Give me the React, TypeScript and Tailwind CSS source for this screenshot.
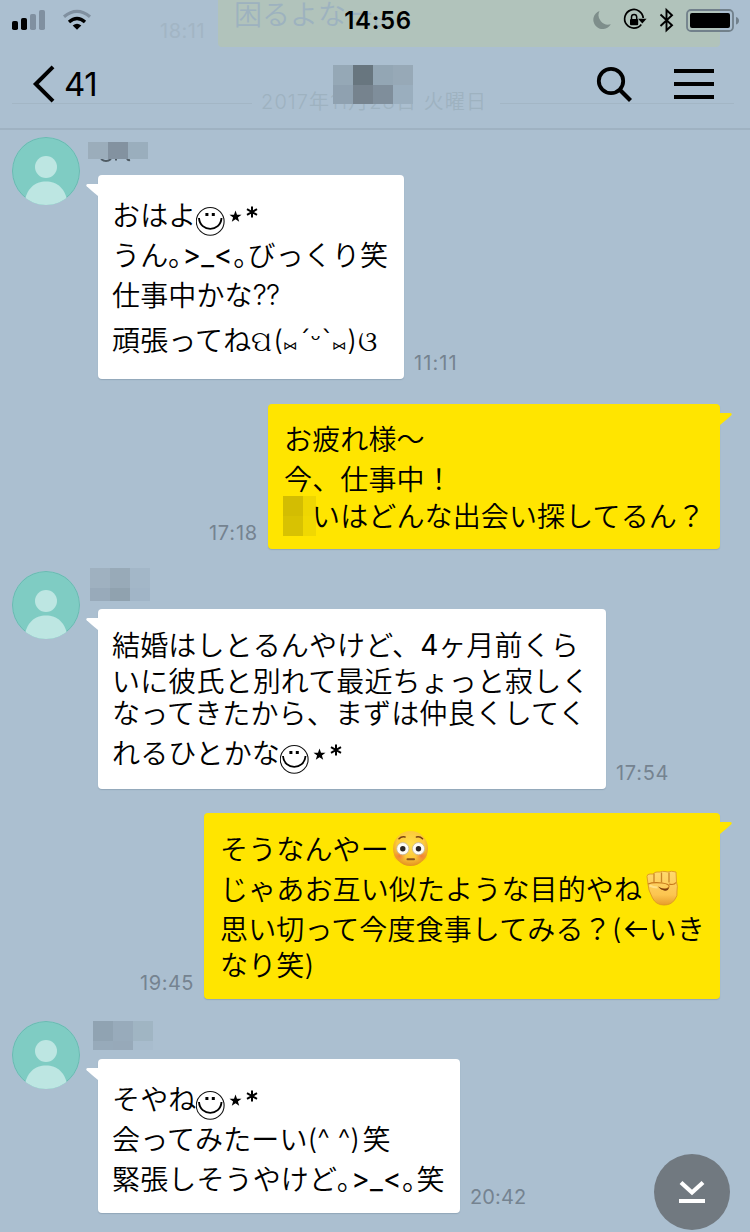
import type { ReactNode } from "react";

const CJK = "font-['Noto_Sans_CJK_JP',sans-serif] font-[350]";
const UI = "font-['Inter','Noto_Sans_CJK_JP',sans-serif]";

function Seg({ w, cls = "", children }: { w: string; cls?: string; children?: ReactNode }) {
  return <span className={`flex shrink-0 items-center whitespace-pre ${w} ${cls}`}>{children}</span>;
}

function Line({ h, children }: { h: string; children: ReactNode }) {
  return <div className={`flex items-center whitespace-pre text-[28px] ${h}`}>{children}</div>;
}

function Jp({ children }: { children: ReactNode }) {
  return <span className={`-mt-[3px] block shrink-0 leading-[28px] tracking-[0.14px] ${CJK}`}>{children}</span>;
}

function Smiley() {
  return (
    <svg className="mt-[11px] shrink-0" width="65" height="30" viewBox="0 0 65 30" fill="none">
      <circle cx="14.2" cy="15.4" r="13.9" stroke="#111" strokeWidth="1.1" />
      <path d="M3 12C4 26.5 24.500 26.500 25.500 12" stroke="#000" strokeWidth="1.9" />
      <path d="M9.400 8.500h3M15.800 8.500h3" stroke="#000" strokeWidth="3" />
      <path d="m39.500 4.500 1.500 4.200 4.500.1-3.600 2.700 1.300 4.300-3.700-2.600-3.700 2.600 1.300-4.300-3.600-2.700 4.500-.1z" fill="#000" />
      <path d="M56 .5v11M51 3.200l10 5.700M61 3.200l-10 5.700" stroke="#000" strokeWidth="2" />
    </svg>
  );
}

function Kao() {
  return <Seg w="w-[51px]" cls="font-['Inter',sans-serif] text-[28px] font-normal tracking-[0.2px] leading-[28px]">{">_<"}</Seg>;
}

function Flushed() {
  return (
    <svg className="ml-[3px] shrink-0" width="38" height="38" viewBox="0 0 38 38">
      <defs>
        <radialGradient id="face" cx=".5" cy=".38" r=".65">
          <stop offset="0" stopColor="#ffe04a" />
          <stop offset=".6" stopColor="#fdc93a" />
          <stop offset="1" stopColor="#e08a1c" />
        </radialGradient>
        <radialGradient id="cheek">
          <stop offset="0" stopColor="#f26a3c" stopOpacity=".8" />
          <stop offset="1" stopColor="#f28a3c" stopOpacity="0" />
        </radialGradient>
      </defs>
      <circle cx="18.500" cy="18.500" r="17.500" fill="url(#face)" />
      <ellipse cx="7.500" cy="26" rx="6.500" ry="5.500" fill="url(#cheek)" />
      <ellipse cx="29.500" cy="26" rx="6.500" ry="5.500" fill="url(#cheek)" />
      <circle cx="10.800" cy="18.700" r="6.100" fill="#fffdf5" stroke="#c4b59a" strokeWidth=".8" />
      <circle cx="26.500" cy="18.700" r="6.100" fill="#fffdf5" stroke="#c4b59a" strokeWidth=".8" />
      <circle cx="10.800" cy="18.700" r="2.700" fill="#2d2724" />
      <circle cx="26.500" cy="18.700" r="2.700" fill="#2d2724" />
      <path d="M7 8.700q2.500-2.500 6-1.700M30.500 8.700q-2.500-2.500-6-1.700" stroke="#7b4312" strokeWidth="1.600" fill="none" strokeLinecap="round" />
      <path d="M15.500 29.200h6.500" stroke="#84501c" strokeWidth="2" strokeLinecap="round" />
    </svg>
  );
}

function Fist() {
  return (
    <svg className="-mt-[3px] ml-[3px] shrink-0" width="36" height="38" viewBox="0 0 36 38">
      <defs>
        <linearGradient id="hand" x2="0" y2="1">
          <stop offset="0" stopColor="#ffda6e" />
          <stop offset=".7" stopColor="#fcc550" />
          <stop offset="1" stopColor="#e79d2c" />
        </linearGradient>
      </defs>
      <path
        d="M3 15 2 7.500Q2 5 5 5L8.500 5Q9 3 12 3L15 3Q17 2 20 2.500L23 3Q26 1.500 31 3L31.500 13Q33 17 32 22Q33 27 29.500 31Q26 36 19 36Q11 36 7.500 29L4 21Z"
        fill="url(#hand)"
        stroke="#dd9725"
        strokeWidth=".9"
      />
      <path d="M9 4.500v9M16.500 3.500v10M24 3.500v10" stroke="#c98528" strokeWidth="1.300" />
      <path d="M3 15q5-2 14-1 8 1 7 4-2 3-8 2M31 13.500q-2 3-7 1.500" stroke="#c87a1c" strokeWidth="1.200" fill="none" />
      <path d="M13 17.500q7 4 11 1-1 4-5 3-4-1-6-4z" fill="#7d3c0c" />
      <path d="M4.500 16.500q4 2 8 2" stroke="#ffe18a" strokeWidth="2" fill="none" />
    </svg>
  );
}

function Avatar() {
  return (
    <svg className="shrink-0" width="68" height="68" viewBox="0 0 68 68">
      <defs>
        <clipPath id="av">
          <circle cx="34" cy="34" r="34" />
        </clipPath>
      </defs>
      <g clipPath="url(#av)">
        <rect width="68" height="68" fill="#7fccc3" />
        <circle cx="34" cy="34" r="33.500" fill="none" stroke="#6cb8b2" />
        <circle cx="34" cy="30" r="11" fill="#bde6e2" />
        <path d="M12 68C14 51 23 44.500 34 44.500S54 51 56 68Z" fill="#bde6e2" />
        <path d="M12 66.500Q34 70 56 66.500V68H12z" fill="#a3cfc8" />
      </g>
    </svg>
  );
}

function TailLeft() {
  return (
    <svg className="absolute -left-[12px] top-[9px]" width="13" height="13" viewBox="0 0 13 13">
      <path d="M13 0H1.500Q-.5.500.7 2.300L6 7L12 12H13z" fill="#fff" />
    </svg>
  );
}

function TailRight() {
  return (
    <svg className="absolute -right-[12px] top-[9px]" width="13" height="13" viewBox="0 0 13 13">
      <path d="M0 0H11.500Q13.500.5 12.300 2.300L7 7L1 12H0z" fill="#ffe500" />
    </svg>
  );
}

function Time({ w, children }: { w: string; children: ReactNode }) {
  return (
    <span className={`mb-[6px] self-end whitespace-nowrap text-[20px] leading-[20px] text-[#758390] ${w} ${UI}`}>{children}</span>
  );
}

function Incoming({ name, size, time, timeW, children }: { name: ReactNode; size: string; time: string; timeW: string; children: ReactNode }) {
  return (
    <div className="flex pl-[12px]">
      <Avatar />
      <div className="flex flex-col pl-[8px]">
        <div className="h-[38px]">{name}</div>
        <div className="flex pl-[10px]">
          <div className={`relative rounded-[4px] bg-white pl-[14px] shadow-[0_1px_1px_rgba(70,95,115,0.25)] ${size}`}>
            <TailLeft />
            {children}
          </div>
          <div className="flex pl-[10px]">
            <Time w={timeW}>{time}</Time>
          </div>
        </div>
      </div>
    </div>
  );
}

function Outgoing({ size, time, timeW, children }: { size: string; time: string; timeW: string; children: ReactNode }) {
  return (
    <div className="flex justify-end pr-[30px]">
      <div className="flex pr-[10px]">
        <Time w={timeW}>{time}</Time>
      </div>
      <div className={`relative rounded-[4px] bg-[#ffe500] pl-[16px] shadow-[0_1px_1px_rgba(70,95,115,0.25)] ${size}`}>
        <TailRight />
        {children}
      </div>
    </div>
  );
}

function Mosaic({ cls, cells }: { cls: string; cells: string[] }) {
  return (
    <div className={`grid ${cls}`}>
      {cells.map((c, i) => (
        <div key={i} className={c} />
      ))}
    </div>
  );
}

function Header() {
  return (
    <header className="relative h-[130px] shrink-0 overflow-hidden border-b-2 border-[#9fb2c2] bg-[#abbfd0]">
      <div className={`absolute left-[160px] top-[21px] text-[20px] leading-[20px] tracking-[0.5px] text-[#a2b5c4] ${UI}`}>18:11</div>
      <div className="absolute left-[218px] top-0 h-[47px] w-[502px] rounded-b-[4px] bg-[#b1c3bb]">
        <div className={`pl-[16px] text-[28px] leading-[26px] text-[#9db2bf] ${CJK}`}>困るよなー。</div>
      </div>
      <div className="absolute left-[12px] top-[103px] h-px w-[240px] bg-[#a3b6c5]" />
      <div className="absolute left-[500px] top-[103px] h-px w-[234px] bg-[#a3b6c5]" />
      <div className="absolute left-[261px] top-[90px] whitespace-nowrap font-['Inter','Noto_Sans_CJK_JP',sans-serif] text-[20px] font-[350] leading-[24px] tracking-[1.1px] text-[#9eb2c0]">
        2017年11月28日 火曜日
      </div>

      <div className="relative flex h-[41px] items-start justify-between">
        <div className="flex w-[333px] pl-[12px] pt-[8px]">
          <svg width="84" height="24" viewBox="0 0 84 24">
            <rect x="0" y="13" width="6" height="9" rx="1.800" />
            <rect x="9" y="10" width="6" height="12" rx="1.800" />
            <rect x="18" y="6" width="6" height="16" rx="1.800" fill="#8090a0" />
            <rect x="27" y="2" width="6" height="20" rx="1.800" fill="#8090a0" />
            <path d="M52 8.700Q65 -1.800 78 8.700" fill="none" stroke="#8090a0" strokeWidth="3.200" />
            <path d="M57 14Q65 7 73 14" fill="none" stroke="#000" strokeWidth="3.400" />
            <path d="M60.700 17.500Q65 14 69.300 17.500L65 21.800z" />
          </svg>
        </div>
        <div className={`w-[84px] pl-[6px] pt-[7px] text-center text-[24px] font-semibold leading-[28px] tracking-[0.7px] ${UI}`}>14:56</div>
        <div className="flex w-[333px] justify-end pr-[11px] pt-[7px]">
          <svg width="148" height="28" viewBox="0 0 148 28" fill="none">
            <path d="M8.500 4A9.300 9.300 0 1 0 19.800 17.200A9.500 9.500 0 0 1 8.500 4z" fill="#7e8e8b" />
            <path d="M50.300 17.500A9.300 9.300 0 1 1 52.200 11" stroke="#000" strokeWidth="1.700" />
            <path d="M47 11.800h8.600L51.300 16.500z" fill="#000" />
            <rect x="39" y="12" width="8.200" height="6.200" rx="1" fill="#000" />
            <path d="M40.500 12.500V10a2.600 2.600 0 0 1 5.200 0v2.500" stroke="#000" strokeWidth="1.500" />
            <path d="M69.500 7.500 81 18.300 75.500 23.300V3L81 8.200 69.500 19" stroke="#000" strokeWidth="1.900" />
            <rect x="96" y="3" width="46" height="21" rx="4" stroke="#71808b" strokeWidth="1.800" />
            <rect x="99" y="6" width="40" height="15" rx="2" fill="#000" />
            <path d="M145 10q3 1 3 3.800t-3 3.800z" fill="#71808b" />
          </svg>
        </div>
      </div>

      <div className="relative flex h-[86px] items-start">
        <div className="flex w-[333px] pl-[32px] pt-[23px]">
          <svg width="24" height="40" viewBox="0 0 24 40" fill="none">
            <path d="M21 2.800 3.800 20 21 37.200" stroke="#000" strokeWidth="4" />
          </svg>
          <span className={`pl-[8px] pt-[2px] text-[33px] leading-[36px] tracking-[-0.5px] ${UI}`}>41</span>
        </div>
        <Mosaic
          cls="mt-[24px] w-[80px] grid-cols-4 grid-rows-[20px_19px]"
          cells={[
            "bg-[#95a8b6]", "bg-[#68767f]", "bg-[#93a6b4]", "bg-[#97a9b7]",
            "bg-[#8fa1b0]", "bg-[#76838e]", "bg-[#7f8e9b]", "bg-[#9aaebe]",
          ]}
        />
        <div className="flex flex-1 justify-end gap-[40px] pr-[36px] pt-[25px]">
          <svg width="38" height="38" viewBox="0 0 38 38" fill="none" stroke="#000">
            <circle cx="15" cy="15" r="12.200" strokeWidth="3.800" />
            <path d="M24 24 34.500 34.500" strokeWidth="4.200" />
          </svg>
          <div className="flex flex-col gap-[9px] pt-[3px]">
            <div className="h-[4px] w-[40px] bg-black" />
            <div className="h-[4px] w-[40px] bg-black" />
            <div className="h-[4px] w-[40px] bg-black" />
          </div>
        </div>
      </div>
    </header>
  );
}

export default function App() {
  return (
    <div className="relative flex h-[1232px] w-[750px] flex-col overflow-hidden bg-[#abbfd0] text-black">
      <Header />
      <main className="flex flex-col pt-[7px]">
        <Incoming
          size="h-[204px] w-[306px] pt-[20px]"
          time="11:11"
          timeW="tracking-[1.1px]"
          name={
            <div className="pt-[5px]">
              <Mosaic cls="w-[60px] grid-cols-3 grid-rows-[17px]" cells={["bg-[#9badbb]", "bg-[#8392a0]", "bg-[#9aaebd]"]} />
              <svg className="ml-[12px]" width="32" height="4" viewBox="0 0 32 4" fill="none">
                <path d="M1 0Q6 4 11 0M16 0v1.500M27 0q1 1.500 3 1" stroke="#4f5b64" strokeWidth="2" />
              </svg>
            </div>
          }
        >
          <Line h="h-[40px]"><Jp>おはよ</Jp><Smiley /></Line>
          <Line h="h-[40px]"><Jp>うん｡</Jp><Kao /><Jp>｡びっくり笑</Jp></Line>
          <Line h="h-[40px]"><Jp>仕事中かな</Jp><Seg w="w-[40px]" cls="font-['Inter',sans-serif] font-[350] leading-[28px] tracking-[-0.8px]">??</Seg></Line>
          <Line h="h-[50px]">
            <Jp>頑張ってね</Jp>
            <Seg w="w-[22px]" cls="leading-[28px]">ପ</Seg>
            <Seg w="w-[10px]" cls="font-['Inter',sans-serif] font-[350] leading-[28px]">(</Seg>
            <Seg w="w-[15px]" cls="pt-[8px] text-[24px] leading-[28px]">⑅</Seg>
            <Seg w="w-[34px]" cls="font-['DejaVu_Sans',sans-serif] text-[25px] leading-[28px]">´ᵕ`</Seg>
            <Seg w="w-[15px]" cls="pt-[8px] text-[24px] leading-[28px]">⑅</Seg>
            <Seg w="w-[11px]" cls="font-['Inter',sans-serif] font-[350] leading-[28px]">)</Seg>
            <Seg w="w-[22px]" cls="leading-[28px]">ଓ</Seg>
          </Line>
        </Incoming>

        <div className="h-[25px]" />
        <Outgoing size="h-[145px] w-[452px] pt-[15px]" time="17:18" timeW="tracking-[0.8px]">
          <Line h="h-[40px]"><Jp>お疲れ様〜</Jp></Line>
          <Line h="h-[40px]"><Jp>今、仕事中！</Jp></Line>
          <Line h="h-[34px]">
            <Mosaic
              cls="-ml-px mr-[-4px] w-[33px] shrink-0 grid-cols-[20px_13px] grid-rows-[20px_20px]"
              cells={["bg-[#d3bd02]", "bg-[#eed602]", "bg-[#d8c202]", "bg-[#f0d802]"]}
            />
            <Jp>いはどんな出会い探してるん？</Jp>
          </Line>
        </Outgoing>

        <div className="h-[22px]" />
        <Incoming
          size="h-[180px] w-[508px] pt-[18px]"
          time="17:54"
          timeW="tracking-[0.7px]"
          name={
            <Mosaic
              cls="-mt-[3px] ml-[2px] w-[60px] grid-cols-3 grid-rows-[20px_13px]"
              cells={["bg-[#9fb1c0]", "bg-[#98aab8]", "bg-[#a3b7c8]", "bg-[#98aaba]", "bg-[#90a2af]", "bg-[#a1b5c7]"]}
            />
          }
        >
          <Line h="h-[36px]"><Jp>結婚はしとるんやけど、</Jp><Seg w="w-[18px]" cls="font-['Inter',sans-serif] leading-[28px]">4</Seg><Jp>ヶ月前くら</Jp></Line>
          <Line h="h-[36px]"><Jp>いに彼氏と別れて最近ちょっと寂しく</Jp></Line>
          <Line h="h-[28px]"><Jp>なってきたから、まずは仲良くしてく</Jp></Line>
          <Line h="h-[52px]"><Jp>れるひとかな</Jp><Smiley /></Line>
        </Incoming>

        <div className="h-[24px]" />
        <Outgoing size="h-[186px] w-[516px] pt-[16px]" time="19:45" timeW="tracking-[0.5px]">
          <Line h="h-[40px]"><Jp>そうなんやー</Jp><Flushed /></Line>
          <Line h="h-[40px]"><Jp>じゃあお互い似たような目的やね</Jp><Fist /></Line>
          <Line h="h-[40px]">
            <Jp>思い切って今度食事してみる？</Jp>
            <Seg w="w-[11px]" cls="font-['Inter',sans-serif] font-[350] leading-[28px]">(</Seg>
            <svg className="mr-px shrink-0" width="25" height="20" viewBox="0 0 25 20" fill="none"><path d="M24 10H3M11 2.500 3.500 10l7.500 7.500" stroke="#000" strokeWidth="2.200" /></svg>
            <Jp>いき</Jp>
          </Line>
          <Line h="h-[32px]"><Jp>なり笑</Jp><Seg w="w-[10px]" cls="font-['Inter',sans-serif] font-[350] leading-[28px]">)</Seg></Line>
        </Outgoing>

        <div className="h-[22px]" />
        <Incoming
          size="h-[154px] w-[362px] pt-[20px]"
          time="20:42"
          timeW="tracking-[0.1px]"
          name={
            <Mosaic
              cls="ml-[5px] w-[60px] grid-cols-3 grid-rows-[20px_9px]"
              cells={["bg-[#90a3b2]", "bg-[#98abbb]", "bg-[#a0b5c3]", "bg-[#97aaba]", "bg-[#97a9b9]", "bg-[#a8bccd]"]}
            />
          }
        >
          <Line h="h-[40px]"><Jp>そやね</Jp><Smiley /></Line>
          <Line h="h-[40px]"><Jp>会ってみたーい</Jp><Seg w="w-[55px]" cls="font-['Inter',sans-serif] font-[350] leading-[28px]">(^ ^)</Seg><Jp>笑</Jp></Line>
          <Line h="h-[40px]"><Jp>緊張しそうやけど｡</Jp><Kao /><Jp>｡笑</Jp></Line>
        </Incoming>
      </main>

      <button className="absolute left-[654px] top-[1154px] flex h-[76px] w-[76px] items-center justify-center rounded-full bg-[#717980]">
        <svg width="28" height="24" viewBox="0 0 28 24" fill="none" stroke="#fff">
          <path d="M3 2.500 14 12.500 25 2.500" strokeWidth="4.200" />
          <path d="M1 21h26" strokeWidth="4" />
        </svg>
      </button>
    </div>
  );
}
